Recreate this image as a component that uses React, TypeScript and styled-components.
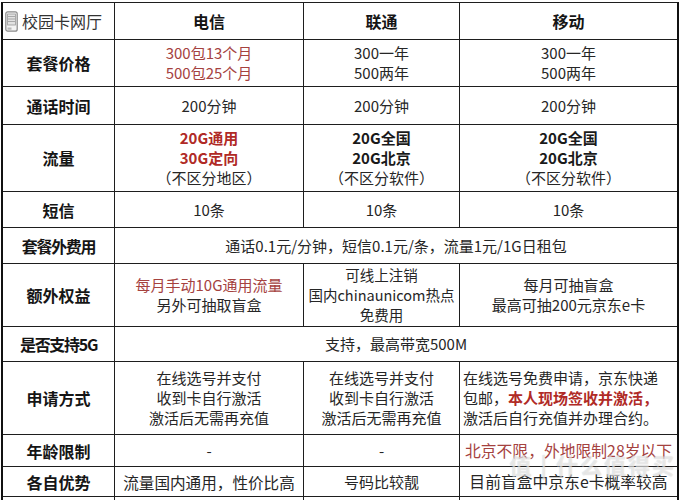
import React from "react";
import styled, { createGlobalStyle } from "styled-components";

const Global = createGlobalStyle`
  html, body { margin: 0; padding: 0; background: #fff; overflow: hidden; }
  body { width: 680px; height: 500px; font-family: "Noto Sans CJK SC", "Noto Sans", sans-serif; }
`;

const Page = styled.div`
  position: relative;
  width: 680px;
  height: 500px;
  padding: 2px 0 0 1px;
  box-sizing: border-box;
  overflow: hidden;
`;

const Table = styled.div`
  display: grid;
  grid-template-columns: 111px 188px 155px 217px;
  grid-template-rows: 36px 46px 37px 66px 35px 35px 62px 34px 72px 31px 29px 40px;
  gap: 1px;
  background: #1e1e1e;
  border-top: 1px solid #1e1e1e;
  border-left: 2px solid #111;
  border-right: 2px solid #111;
  width: fit-content;
`;

const Cell = styled.div<{ $span?: number; $left?: boolean; $size?: number }>`
  background: #fff;
  grid-column: span ${(p) => p.$span ?? 1};
  display: flex;
  flex-direction: column;
  justify-content: center;
  align-items: ${(p) => (p.$left ? "flex-start" : "center")};
  padding: ${(p) => (p.$left ? "0 0 0 3px" : "0")};
  text-align: ${(p) => (p.$left ? "left" : "center")};
  font-size: ${(p) => p.$size ?? 15}px;
  line-height: 20px;
  color: #262626;
  white-space: nowrap;
  overflow: hidden;
`;

const Label = styled(Cell)<{ $tight?: boolean }>`
  font-size: 16px;
  font-weight: 700;
  color: #151515;
  letter-spacing: ${(p) => (p.$tight ? "-1.3px" : "0")};
`;

const Carrier = styled(Cell)`
  font-size: 16px;
  font-weight: 700;
  color: #151515;
`;

const Brand = styled(Cell)`
  flex-direction: row;
  justify-content: flex-start;
  gap: 4px;
  padding-left: 2px;
  font-size: 16px;
  color: #333;
`;

const Red = styled.span`
  color: #a5423f;
`;

const RedBold = styled.span`
  color: #b02a26;
  font-weight: 700;
`;

const Bold = styled.span`
  font-weight: 700;
  color: #1a1a1a;
`;

const Watermark = styled.div`
  position: absolute;
  right: 4px;
  bottom: 20px;
  font-size: 22px;
  font-weight: 700;
  color: rgba(255, 255, 255, 0.55);
  text-shadow: 0 0 1px rgba(120, 120, 120, 0.4);
  letter-spacing: 2px;
  pointer-events: none;
`;

const SimIcon = () => (
  <svg width="13" height="21" viewBox="0 0 13 21">
    <rect x="0.8" y="0.8" width="11.4" height="19.4" rx="2" fill="#f4f4f4" stroke="#8a8a8a" strokeWidth="1.2" />
    <rect x="2.6" y="3" width="7.8" height="11" fill="#e2e2e2" stroke="#9a9a9a" strokeWidth="0.8" />
    <line x1="3" y1="5.5" x2="10" y2="5.5" stroke="#9a9a9a" strokeWidth="0.8" />
    <line x1="3" y1="8" x2="10" y2="8" stroke="#9a9a9a" strokeWidth="0.8" />
    <line x1="3" y1="10.5" x2="10" y2="10.5" stroke="#9a9a9a" strokeWidth="0.8" />
    <path d="M2.5 16.5 h4 v2.2 h-4 z" fill="#bbb" />
  </svg>
);

const Lines = ({ items }: { items: React.ReactNode[] }) => (
  <>
    {items.map((t, i) => (
      <div key={i}>{t}</div>
    ))}
  </>
);

export default function App() {
  return (
    <>
      <Global />
      <Page>
        <Table>
          <Brand>
            <SimIcon />
            <span>校园卡网厅</span>
          </Brand>
          <Carrier>电信</Carrier>
          <Carrier>联通</Carrier>
          <Carrier>移动</Carrier>

          <Label>套餐价格</Label>
          <Cell>
            <Lines items={[<Red>300包13个月</Red>, <Red>500包25个月</Red>]} />
          </Cell>
          <Cell>
            <Lines items={["300一年", "500两年"]} />
          </Cell>
          <Cell>
            <Lines items={["300一年", "500两年"]} />
          </Cell>

          <Label>通话时间</Label>
          <Cell>200分钟</Cell>
          <Cell>200分钟</Cell>
          <Cell>200分钟</Cell>

          <Label>流量</Label>
          <Cell>
            <Lines items={[<RedBold>20G通用</RedBold>, <RedBold>30G定向</RedBold>, "（不区分地区）"]} />
          </Cell>
          <Cell>
            <Lines items={[<Bold>20G全国</Bold>, <Bold>20G北京</Bold>, "（不区分软件）"]} />
          </Cell>
          <Cell>
            <Lines items={[<Bold>20G全国</Bold>, <Bold>20G北京</Bold>, "（不区分软件）"]} />
          </Cell>

          <Label>短信</Label>
          <Cell>10条</Cell>
          <Cell>10条</Cell>
          <Cell>10条</Cell>

          <Label $tight>套餐外费用</Label>
          <Cell $span={3}>通话0.1元/分钟，短信0.1元/条，流量1元/1G日租包</Cell>

          <Label>额外权益</Label>
          <Cell>
            <Lines items={[<Red>每月手动10G通用流量</Red>, "另外可抽取盲盒"]} />
          </Cell>
          <Cell $size={14.5}>
            <Lines items={["可线上注销", "国内chinaunicom热点", "免费用"]} />
          </Cell>
          <Cell>
            <Lines items={["每月可抽盲盒", "最高可抽200元京东e卡"]} />
          </Cell>

          <Label $tight>是否支持5G</Label>
          <Cell $span={3}>支持，最高带宽500M</Cell>

          <Label>申请方式</Label>
          <Cell>
            <Lines items={["在线选号并支付", "收到卡自行激活", "激活后无需再充值"]} />
          </Cell>
          <Cell>
            <Lines items={["在线选号并支付", "收到卡自行激活", "激活后无需再充值"]} />
          </Cell>
          <Cell $left>
            <Lines
              items={[
                "在线选号免费申请，京东快递",
                <>
                  包邮，<RedBold>本人现场签收并激活，</RedBold>
                </>,
                "激活后自行充值并办理合约。",
              ]}
            />
          </Cell>

          <Label>年龄限制</Label>
          <Cell>-</Cell>
          <Cell>-</Cell>
          <Cell $size={15.8}>
            <Red>北京不限，外地限制28岁以下</Red>
          </Cell>

          <Label>各自优势</Label>
          <Cell $size={15.6}>流量国内通用，性价比高</Cell>
          <Cell>号码比较靓</Cell>
          <Cell $size={15.8}>目前盲盒中京东e卡概率较高</Cell>

          <Label />
          <Cell />
          <Cell />
          <Cell />
        </Table>
        <Watermark>值 | 什么值得买</Watermark>
      </Page>
    </>
  );
}
